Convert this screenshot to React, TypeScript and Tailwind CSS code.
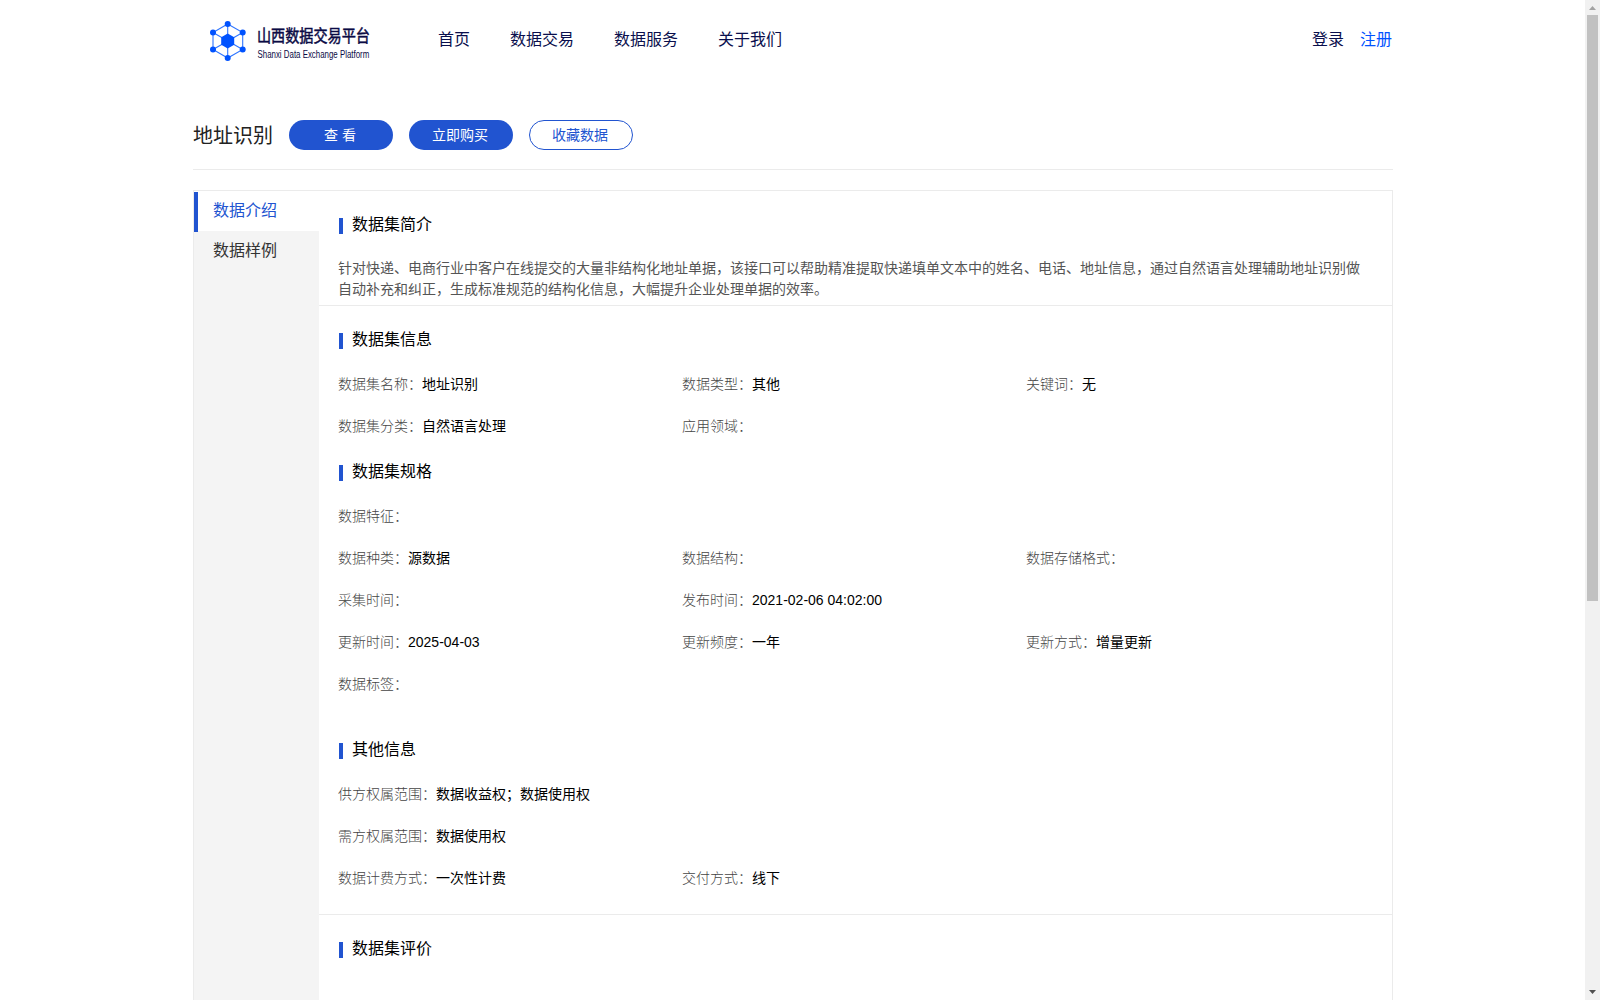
import React from 'react';

interface Field {
    label: string;
    value?: string;
}

const navItems = ['首页', '数据交易', '数据服务', '关于我们'];

const infoRows: Field[][] = [
    [{ label: '数据集名称', value: '地址识别' }, { label: '数据类型', value: '其他' }, { label: '关键词', value: '无' }],
    [{ label: '数据集分类', value: '自然语言处理' }, { label: '应用领域' }]
];

const specRows: Field[][] = [
    [{ label: '数据特征' }],
    [{ label: '数据种类', value: '源数据' }, { label: '数据结构' }, { label: '数据存储格式' }],
    [{ label: '采集时间' }, { label: '发布时间', value: '2021-02-06 04:02:00' }],
    [{ label: '更新时间', value: '2025-04-03' }, { label: '更新频度', value: '一年' }, { label: '更新方式', value: '增量更新' }],
    [{ label: '数据标签' }]
];

const otherRows: Field[][] = [
    [{ label: '供方权属范围', value: '数据收益权；数据使用权' }],
    [{ label: '需方权属范围', value: '数据使用权' }],
    [{ label: '数据计费方式', value: '一次性计费' }, { label: '交付方式', value: '线下' }]
];

const Logo: React.FC = () => (
    <svg width="180" height="48" viewBox="0 0 180 48" className="overflow-visible">
        <g stroke="#2f75ff" strokeWidth="1.1" fill="none">
            <path d="M17.7 4 32.7 12.5V29.5L17.7 38 3 29.5V12.5Z" />
            <path d="M17.7 4V38M3 12.5 32.7 29.5M32.7 12.5 3 29.5" />
        </g>
        <g fill="#0052ff">
            <path d="M17.7 13.6 24.2 17.3V24.7L17.7 28.4 11.2 24.7V17.3Z" />
            <circle cx="17.7" cy="4" r="3" />
            <circle cx="17.7" cy="38" r="3" />
            <circle cx="3" cy="12.5" r="3" />
            <circle cx="3" cy="29.5" r="3" />
            <circle cx="32.7" cy="12.5" r="3" />
            <circle cx="32.7" cy="29.5" r="3" />
        </g>
        <g fill="#0b0b45">
            <text x="47" y="21.7" fontSize="17" stroke="#0b0b45" strokeWidth="0.5" textLength="113" lengthAdjust="spacingAndGlyphs">山西数据交易平台</text>
            <text transform="translate(47.5 37.7) scale(0.85 1)" fontSize="10" textLength="131.5" lengthAdjust="spacingAndGlyphs">Shanxi Data Exchange Platform</text>
        </g>
    </svg>
);

const SectionTitle: React.FC<{ children: React.ReactNode }> = ({ children }) => (
    <h2 className="flex gap-[9px] h-4 text-base leading-4 text-black">
        <span className="w-1 h-4 bg-[#2154d0]" />
        <span className="-mt-px">{children}</span>
    </h2>
);

const FieldRows: React.FC<{ rows: Field[][] }> = ({ rows }) => (
    <div className="-ml-px mt-3.5 mb-px text-sm">
        {rows.map((row, i) => (
            <div key={i} className="grid grid-cols-[344px_344px_344px] items-center h-[42px]">
                {row.map(item => (
                    <div key={item.label} className="whitespace-nowrap">
                        <span className="font-light text-[#444]">{item.label}：</span>
                        <span className="text-black">{item.value}</span>
                    </div>
                ))}
            </div>
        ))}
    </div>
);

const Scrollbar: React.FC = () => (
    <div className="flex flex-col items-center justify-between w-[15px] h-full bg-[#f1f1f1]">
        <div className="flex flex-col items-center">
            <svg width="15" height="15" viewBox="0 0 15 15"><path d="M4 10h7L7.5 6z" fill="#a3a3a3" /></svg>
            <div className="w-[11px] h-[586px] bg-[#c1c1c1]" />
        </div>
        <svg width="15" height="15" viewBox="0 0 15 15"><path d="M4 5h7L7.5 9z" fill="#505050" /></svg>
    </div>
);

export default function App() {
    return (
        <div className="flex h-[1000px] overflow-hidden bg-white font-['Liberation_Sans','Noto_Sans_CJK_SC',sans-serif]">
            <div className="flex-1">
                <div className="ml-[193px] w-[1200px]">
                    {/* Header */}
                    <header className="flex h-20 text-base text-[#0a0f4d]">
                        <div className="w-[245px] pl-[17px] pt-5">
                            <Logo />
                        </div>
                        <nav className="flex gap-10 pt-7">
                            {navItems.map(item => <a key={item}>{item}</a>)}
                        </nav>
                        <div className="ml-auto flex gap-4 pt-7 pr-px">
                            <a>登录</a>
                            <a className="text-[#0052ff]">注册</a>
                        </div>
                    </header>

                    {/* Title and actions */}
                    <div className="flex items-center gap-4 h-[90px] pt-[21px] border-b border-[#ebebeb] text-sm">
                        <h1 className="mt-0.5 text-xl text-[#222]">地址识别</h1>
                        <button className="w-[104px] h-[30px] pr-0.5 rounded-full bg-[#2154d0] text-white">查 看</button>
                        <button className="w-[104px] h-[30px] pr-0.5 rounded-full bg-[#2154d0] text-white">立即购买</button>
                        <button className="w-[104px] h-[30px] pr-0.5 rounded-full border border-[#2154d0] text-[#2154d0]">收藏数据</button>
                    </div>

                    <div className="mt-5 flex h-[900px] border border-[#ebebeb]">
                        {/* Tabs */}
                        <aside className="w-[125px] bg-[#f4f4f4] text-base">
                            <div className="h-10 bg-white pt-px">
                                <div className="h-10 border-l-4 border-[#2154d0] pl-[15px] leading-[37px] text-[#2154d0]">数据介绍</div>
                            </div>
                            <div className="h-10 pl-[19px] leading-[39px] text-[#333]">数据样例</div>
                        </aside>

                        <main className="flex-1">
                            <section className="h-[115px] pl-5 pt-[27px] border-b border-[#ebebeb]">
                                <SectionTitle>数据集简介</SectionTitle>
                                <p className="-ml-px mt-6 w-[1030px] text-sm leading-[21px] text-[#555]">
                                    针对快递、电商行业中客户在线提交的大量非结构化地址单据，该接口可以帮助精准提取快递填单文本中的姓名、电话、地址信息，通过自然语言处理辅助地址识别做自动补充和纠正，生成标准规范的结构化信息，大幅提升企业处理单据的效率。
                                </p>
                            </section>
                            <section className="h-[609px] pl-5 pt-[27px] border-b border-[#ebebeb]">
                                <SectionTitle>数据集信息</SectionTitle>
                                <FieldRows rows={infoRows} />
                                <div className="h-[17px]" />
                                <SectionTitle>数据集规格</SectionTitle>
                                <FieldRows rows={specRows} />
                                <div className="h-[37px]" />
                                <SectionTitle>其他信息</SectionTitle>
                                <FieldRows rows={otherRows} />
                            </section>
                            <section className="pl-5 pt-[27px]">
                                <SectionTitle>数据集评价</SectionTitle>
                            </section>
                        </main>
                    </div>
                </div>
            </div>
            <Scrollbar />
        </div>
    );
}
